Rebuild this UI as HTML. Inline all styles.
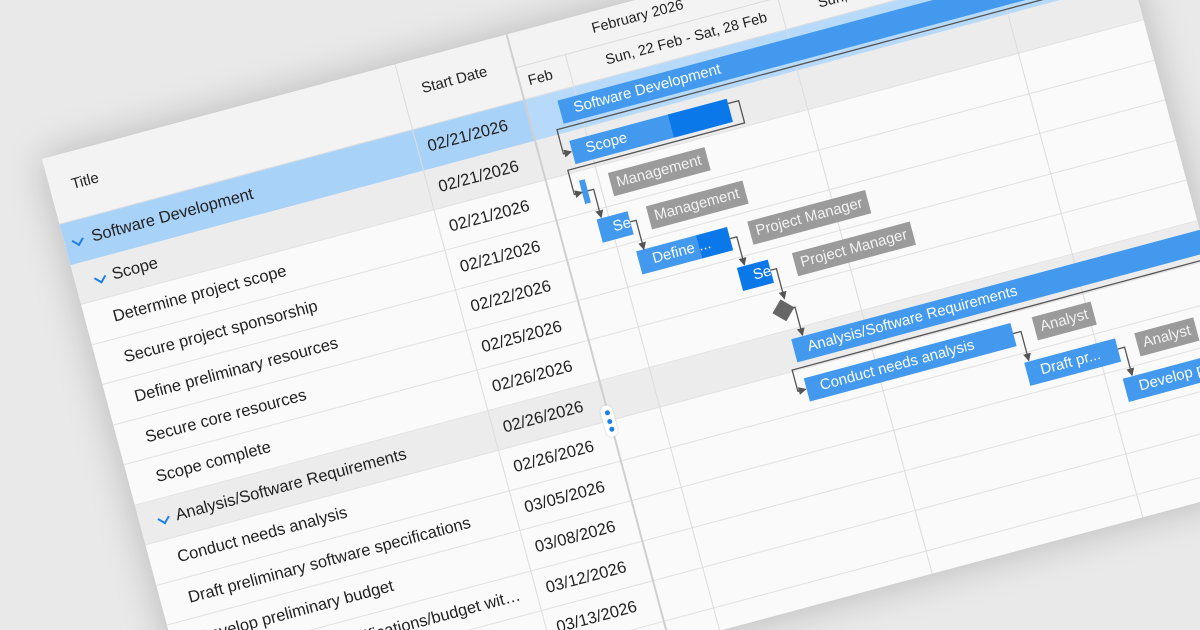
<!DOCTYPE html>
<html><head><meta charset="utf-8"><style>
html,body{margin:0;padding:0;width:1200px;height:630px;overflow:hidden;background:#e9e9e9;}
#wrap{position:relative;width:1200px;height:630px;overflow:hidden;}
#p{position:absolute;left:42px;top:159px;width:1100px;height:631px;transform-origin:0 0;transform:rotate(-15deg);background:#fafafa;box-shadow:0 0 40px rgba(0,0,0,.22);overflow:hidden;font-family:"Liberation Sans",sans-serif;color:#222;}
.a{position:absolute;box-sizing:border-box;white-space:nowrap;}
.hd{background:#f3f3f3;}
.row{position:absolute;left:0;width:1100px;height:41.5px;border-bottom:1px solid #e2e2e2;box-sizing:border-box;}
.t{position:absolute;font-size:16.5px;line-height:41.5px;top:0;white-space:nowrap;}
.d{position:absolute;left:376px;font-size:16.5px;line-height:41.5px;top:0;white-space:nowrap;}
.chev{position:absolute;top:15px;width:7px;height:7px;border-right:2px solid #1a7fe6;border-bottom:2px solid #1a7fe6;transform:rotate(45deg);}
.bar{position:absolute;height:24px;background:#4299ee;color:#fff;font-size:15px;line-height:24px;overflow:hidden;white-space:nowrap;box-sizing:border-box;}
.lbl{position:absolute;height:24px;background:#9b9b9b;color:#f2f2f2;font-size:15px;line-height:24px;padding:0 6px;white-space:nowrap;}
.vl{position:absolute;width:1px;background:#dcdcdc;}
</style></head><body>
<div id="wrap">
<div id="p">
<div class="a hd" style="left:0;top:0;width:1100px;height:68px;border-bottom:1px solid #dcdcdc;"></div>
<div class="a" style="left:22px;top:24px;font-size:15px;">Title</div>
<div class="a" style="left:385px;top:22px;font-size:15px;">Start Date</div>
<div class="a" style="left:480px;top:34px;width:620px;height:1px;background:#dcdcdc;"></div>
<div class="a" style="left:565px;top:9px;font-size:14.5px;">February 2026</div>
<div class="a" style="left:490px;top:43px;font-size:14.5px;">Feb</div>
<div class="a" style="left:570px;top:43px;font-size:14.5px;">Sun, 22 Feb - Sat, 28 Feb</div>
<div class="a" style="left:790px;top:43px;font-size:14.5px;">Sun, 1 Mar - Sat, 7 Mar</div>
<div class="a" style="left:1005px;top:43px;font-size:14.5px;">Sun, 8 Mar - Sat, 14 Mar</div>
<div class="row" style="top:68px;"><div class="a" style="left:0;top:0;width:480px;height:41.5px;background:#a9d2f8"></div><div class="a" style="left:480px;top:0;width:620px;height:41.5px;background:#b7dafa"></div><div class="chev" style="left:9px"></div><div class="t" style="left:28px">Software Development</div><div class="d">02/21/2026</div></div>
<div class="row" style="top:109.5px;background:#ececec;"><div class="chev" style="left:21px"></div><div class="t" style="left:38px">Scope</div><div class="d">02/21/2026</div></div>
<div class="row" style="top:151px;"><div class="t" style="left:28px">Determine project scope</div><div class="d">02/21/2026</div></div>
<div class="row" style="top:192.5px;"><div class="t" style="left:28px">Secure project sponsorship</div><div class="d">02/21/2026</div></div>
<div class="row" style="top:234px;"><div class="t" style="left:28px">Define preliminary resources</div><div class="d">02/22/2026</div></div>
<div class="row" style="top:275.5px;"><div class="t" style="left:28px">Secure core resources</div><div class="d">02/25/2026</div></div>
<div class="row" style="top:317px;"><div class="t" style="left:28px">Scope complete</div><div class="d">02/26/2026</div></div>
<div class="row" style="top:358.5px;background:#ececec;"><div class="chev" style="left:20px"></div><div class="t" style="left:37px">Analysis/Software Requirements</div><div class="d">02/26/2026</div></div>
<div class="row" style="top:400px;"><div class="t" style="left:28px">Conduct needs analysis</div><div class="d">02/26/2026</div></div>
<div class="row" style="top:441.5px;"><div class="t" style="left:28px">Draft preliminary software specifications</div><div class="d">03/05/2026</div></div>
<div class="row" style="top:483px;"><div class="t" style="left:28px">Develop preliminary budget</div><div class="d">03/08/2026</div></div>
<div class="row" style="top:524.5px;"><div class="t" style="left:28px;width:330px;overflow:hidden;text-overflow:ellipsis">Review software specifications/budget with team</div><div class="d">03/12/2026</div></div>
<div class="row" style="top:566px;"><div class="t" style="left:28px;width:330px;overflow:hidden;text-overflow:ellipsis">Incorporate feedback on software specifications</div><div class="d">03/13/2026</div></div>
<div class="vl" style="left:365px;top:0;height:631px;"></div>
<div class="vl" style="left:480px;top:0;height:631px;background:#cfcfcf;width:2px;"></div>
<div class="vl" style="left:532px;top:34px;height:597px;"></div>
<div class="vl" style="left:752px;top:0;height:631px;"></div>
<div class="vl" style="left:970px;top:34px;height:597px;"></div>
<div class="bar" style="left:513px;top:77px;width:700px;padding-left:14px;">Software Development</div>
<div class="bar" style="left:514px;top:118.5px;width:163px;padding-left:14px;background:linear-gradient(90deg,#4299ee 0 102px,#0a78e8 102px)">Scope</div>
<div class="bar" style="left:513px;top:160px;width:6px;"></div>
<div class="lbl" style="left:543px;top:160px;">Management</div>
<div class="bar" style="left:520px;top:201.5px;width:32px;padding-left:14px;">Se</div>
<div class="lbl" style="left:571px;top:201.5px;">Management</div>
<div class="bar" style="left:550px;top:243px;width:94px;padding-left:14px;background:linear-gradient(90deg,#4299ee 0 62px,#0a78e8 62px)">Define ...</div>
<div class="lbl" style="left:665px;top:243px;">Project Manager</div>
<div class="bar" style="left:643px;top:284.5px;width:32px;padding-left:14px;background:#0a78e8">Se</div>
<div class="lbl" style="left:700px;top:284.5px;">Project Manager</div>
<div class="a" style="left:669px;top:330px;width:16px;height:16px;background:#666;transform:rotate(45deg);"></div>
<div class="bar" style="left:677px;top:367.5px;width:600px;padding-left:14px;">Analysis/Software Requirements</div>
<div class="bar" style="left:679px;top:409px;width:214px;padding-left:14px;">Conduct needs analysis</div>
<div class="lbl" style="left:915px;top:409px;">Analyst</div>
<div class="bar" style="left:896px;top:450.5px;width:94px;padding-left:14px;">Draft pr...</div>
<div class="lbl" style="left:1010px;top:450.5px;">Analyst</div>
<div class="bar" style="left:987px;top:492px;width:140px;padding-left:14px;">Develop preliminary</div>
<svg class="a" style="left:0;top:0" width="1100" height="631">
<defs><marker id="ar" markerWidth="8" markerHeight="8" refX="7" refY="4" orient="auto" markerUnits="userSpaceOnUse"><path d="M0,0 L8,4 L0,8 z" fill="#555"/></marker></defs>
<g fill="none" stroke="#555" stroke-width="1.3" marker-end="url(#ar)">
<path d="M1100,105 H505 V130 H513"/>
<path d="M677,124 H688 V147 H505 V172 H513"/>
<path d="M519,172 H525 V201"/>
<path d="M552,213 H558 V243"/>
<path d="M644,255 H651 V284"/>
<path d="M675,296 H681 V327"/>
<path d="M686,338 H689 V367"/>
<path d="M1100,398 H670 V420 H678"/>
<path d="M893,420 H901 V450"/>
<path d="M990,462 H997 V491"/>
</g></svg>
<div class="a" style="left:474px;top:384px;width:12px;height:32px;background:#fff;border-radius:6px;box-shadow:0 0 2px rgba(0,0,0,.2);"></div>
<div class="a" style="left:477.5px;top:389px;width:5px;height:5px;border-radius:50%;background:#1a7fe6"></div>
<div class="a" style="left:477.5px;top:397.5px;width:5px;height:5px;border-radius:50%;background:#1a7fe6"></div>
<div class="a" style="left:477.5px;top:406px;width:5px;height:5px;border-radius:50%;background:#1a7fe6"></div>
</div>
</div>
</body></html>
